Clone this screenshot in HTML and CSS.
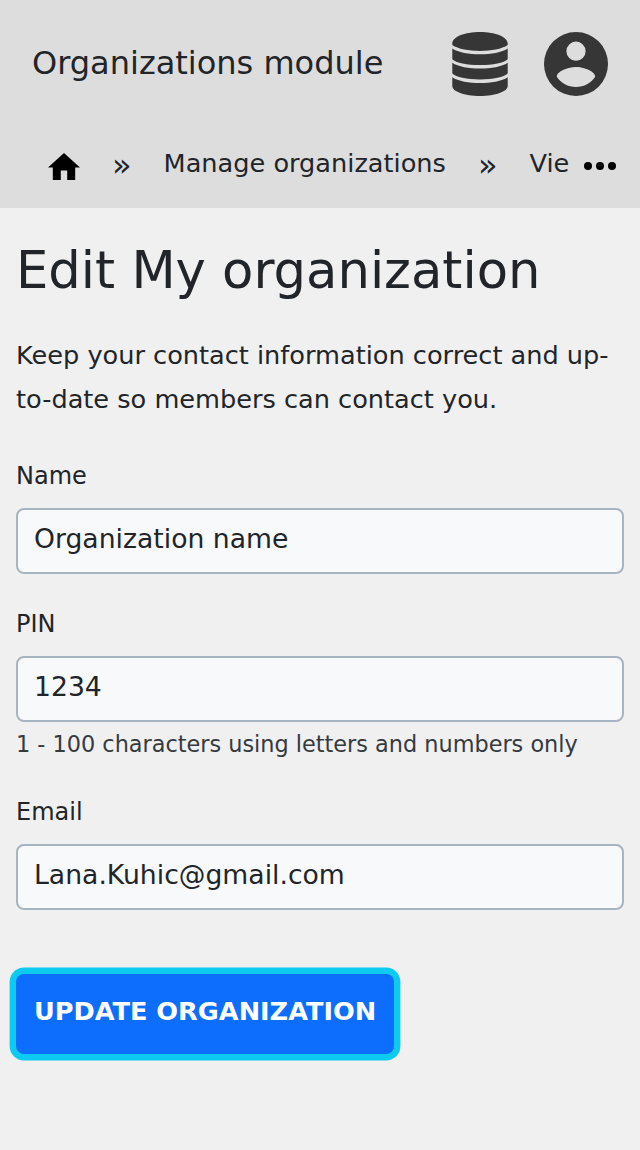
FILE: index.html
```html
<!DOCTYPE html>
<html lang="en">
<head>
<meta charset="utf-8">
<title>Edit My organization</title>
<link rel="stylesheet" href="styles.css">
</head>
<body>
<header class="header">
  <div class="topbar">
    <div class="brand">Organizations module</div>
    <svg class="icon-db" viewBox="0 0 56 64"><path d="M.3 11.500C.3 5 12.500 0 28 0s27.700 5 27.700 11.500v1.600C50 17.100 39 19 28 19S6 17.100.3 13.100zM.3 16.400C6 20.400 17 22.200 28 22.200S50 20.400 55.700 16.400v10.800C52 31 41 33 28 33S4 31 .3 27.200zM.3 30.800C6 34.800 17 36.600 28 36.600s22-1.800 27.700-5.800v10.800C52 45.400 41 47.400 28 47.400S4 45.400.3 41.600zM.3 45.200C6 49.200 17 51 28 51s22-1.800 27.700-5.800V54C55.700 59.500 43.500 64 28 64S.3 59.500.3 54z"/></svg>
    <svg class="icon-user" viewBox="0 0 64 64"><path fill-rule="evenodd" d="M32 0a32 32 0 1 0 0 64 32 32 0 0 0 0-64zm0 9.600a9.600 9.600 0 1 1 0 19.200 9.600 9.600 0 0 1 0-19.200zm0 45.440c-8 0-15.070-4.100-19.200-10.300.1-6.370 12.800-9.860 19.200-9.860 6.370 0 19.100 3.490 19.200 9.860-4.130 6.200-11.200 10.300-19.200 10.300z"/></svg>
  </div>
  <nav class="crumbs">
    <svg class="icon-home" viewBox="2 3 20 17"><path d="M10 20v-6h4v6h5v-8h3L12 3 2 12h3v8z"/></svg>
    <span class="sep">»</span>
    <span class="crumb">Manage organizations</span>
    <span class="sep">»</span>
    <span class="crumb-last">Vie</span>
    <svg class="icon-more" viewBox="0 0 32 8"><circle cx="4" cy="4" r="4"/><circle cx="16" cy="4" r="4"/><circle cx="28" cy="4" r="4"/></svg>
  </nav>
</header>
<main class="content">
  <h1 class="title">Edit My organization</h1>
  <p class="intro">Keep your contact information correct and up-to-date so members can contact you.</p>
  <form class="form">
    <div class="field"><label class="label" for="name">Name</label><input class="input" id="name" value="Organization name"></div>
    <div class="field"><label class="label" for="pin">PIN</label><input class="input" id="pin" value="1234"><div class="help">1 - 100 characters using letters and numbers only</div></div>
    <div class="field"><label class="label" for="email">Email</label><input class="input" id="email" value="Lana.Kuhic@gmail.com"></div>
    <button class="submit" type="button">UPDATE ORGANIZATION</button>
  </form>
</main>
</body>
</html>
```
FILE: styles.css
```css
* { box-sizing: border-box; }
body { margin: 0; min-height: 1150px; background: #f0f0f0; color: #212529; font-family: "DejaVu Sans", sans-serif; }
.header { height: 208px; background: #ddd; }
.topbar { height: 128px; display: flex; align-items: center; padding: 0 32px; }
.brand { flex: 1; padding-bottom: 2px; font-size: 32px; line-height: 48px; white-space: nowrap; }
.icon-db { width: 56px; height: 64px; fill: #363636; margin-right: 36px; }
.icon-user { width: 64px; height: 64px; fill: #363636; }
.crumbs { height: 80px; display: flex; padding: 16px 24px 0 48px; white-space: nowrap; font-size: 25.6px; line-height: 38px; }
.icon-home { width: 32px; height: 27.2px; margin: 8.5px 32px 0 0; }
.sep { width: 19.6px; margin-right: 32px; padding-top: 2px; font-size: 32px; }
.crumb { margin-right: 32px; }
.icon-more { width: 32px; height: 8px; margin: 18px 0 0 auto; }
.content { padding: 31px 16px 0; }
.title { margin: 0; font-size: 51.2px; font-weight: 400; line-height: 62px; white-space: nowrap; }
.intro { margin: 32px 0 0; font-size: 25.6px; line-height: 44px; }
.form { padding-top: 37px; }
.field { margin-bottom: 32px; }
.label { display: block; height: 50px; font-size: 24px; line-height: 36px; }
.input { display: block; width: 100%; height: 66px; padding: 0 16px 5px; border: 2px solid #a7b4c2; border-radius: 8px; background: #f8f9fb; color: #212529; font: 26.65px "DejaVu Sans", sans-serif; outline: 0; }
.help { padding: 5px 0 1px; font-size: 22.38px; line-height: 34px; color: #343a40; }
.submit { display: block; width: 378px; height: 80px; margin-top: 64px; padding: 0 0 7px; border: 0; border-radius: 8px; background: #0d6efd; box-shadow: 0 0 0 6.4px #0dcaf0; color: #fff; font: bold 25.6px "DejaVu Sans", sans-serif; white-space: nowrap; }
```
